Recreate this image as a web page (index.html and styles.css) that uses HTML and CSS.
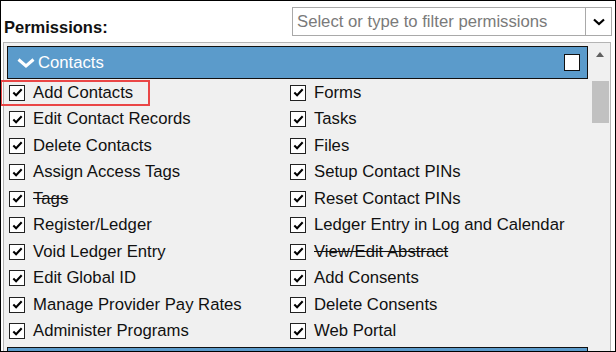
FILE: index.html
```html
<!DOCTYPE html>
<html lang="en">
<head>
    <meta charset="UTF-8">
    <meta name="viewport" content="width=device-width, initial-scale=1.0">
    <title>Permissions</title>
    <link rel="stylesheet" href="styles.css">
</head>
<body>
    <div class="frame">
        <!-- Top bar: label + filter -->
        <div class="top-bar">
            <label class="perm-label" for="permFilter">Permissions:</label>
            <div class="filter">
                <input id="permFilter" type="text" placeholder="Select or type to filter permissions">
                <span class="filter-btn">
                    <svg width="12" height="8" viewBox="0 0 12 8"><path d="M1 1.5 L6 6 L11 1.5" fill="none" stroke="#000" stroke-width="2.2"/></svg>
                </span>
            </div>
        </div>

        <!-- Permissions panel -->
        <div class="panel">
            <div class="panel-body">
                <div class="group-header">
                    <svg class="chev" width="18" height="10" viewBox="0 0 18 10"><path d="M1.5 1.5 L9 8 L16.5 1.5" fill="none" stroke="#fff" stroke-width="3"/></svg>
                    <span class="group-title">Contacts</span>
                    <span class="group-check"></span>
                </div>

                <div class="perm-grid">
                    <div class="perm"><span class="cb"><svg viewBox="0 0 14 14"><path d="M2.5 7 L5.5 10 L11.5 3.5" fill="none" stroke="#000" stroke-width="2.2"/></svg></span>Add Contacts</div>
                    <div class="perm"><span class="cb"><svg viewBox="0 0 14 14"><path d="M2.5 7 L5.5 10 L11.5 3.5" fill="none" stroke="#000" stroke-width="2.2"/></svg></span>Forms</div>
                    <div class="perm"><span class="cb"><svg viewBox="0 0 14 14"><path d="M2.5 7 L5.5 10 L11.5 3.5" fill="none" stroke="#000" stroke-width="2.2"/></svg></span>Edit Contact Records</div>
                    <div class="perm"><span class="cb"><svg viewBox="0 0 14 14"><path d="M2.5 7 L5.5 10 L11.5 3.5" fill="none" stroke="#000" stroke-width="2.2"/></svg></span>Tasks</div>
                    <div class="perm"><span class="cb"><svg viewBox="0 0 14 14"><path d="M2.5 7 L5.5 10 L11.5 3.5" fill="none" stroke="#000" stroke-width="2.2"/></svg></span>Delete Contacts</div>
                    <div class="perm"><span class="cb"><svg viewBox="0 0 14 14"><path d="M2.5 7 L5.5 10 L11.5 3.5" fill="none" stroke="#000" stroke-width="2.2"/></svg></span>Files</div>
                    <div class="perm"><span class="cb"><svg viewBox="0 0 14 14"><path d="M2.5 7 L5.5 10 L11.5 3.5" fill="none" stroke="#000" stroke-width="2.2"/></svg></span>Assign Access Tags</div>
                    <div class="perm"><span class="cb"><svg viewBox="0 0 14 14"><path d="M2.5 7 L5.5 10 L11.5 3.5" fill="none" stroke="#000" stroke-width="2.2"/></svg></span>Setup Contact PINs</div>
                    <div class="perm"><span class="cb"><svg viewBox="0 0 14 14"><path d="M2.5 7 L5.5 10 L11.5 3.5" fill="none" stroke="#000" stroke-width="2.2"/></svg></span><s>Tags</s></div>
                    <div class="perm"><span class="cb"><svg viewBox="0 0 14 14"><path d="M2.5 7 L5.5 10 L11.5 3.5" fill="none" stroke="#000" stroke-width="2.2"/></svg></span>Reset Contact PINs</div>
                    <div class="perm"><span class="cb"><svg viewBox="0 0 14 14"><path d="M2.5 7 L5.5 10 L11.5 3.5" fill="none" stroke="#000" stroke-width="2.2"/></svg></span>Register/Ledger</div>
                    <div class="perm"><span class="cb"><svg viewBox="0 0 14 14"><path d="M2.5 7 L5.5 10 L11.5 3.5" fill="none" stroke="#000" stroke-width="2.2"/></svg></span>Ledger Entry in Log and Calendar</div>
                    <div class="perm"><span class="cb"><svg viewBox="0 0 14 14"><path d="M2.5 7 L5.5 10 L11.5 3.5" fill="none" stroke="#000" stroke-width="2.2"/></svg></span>Void Ledger Entry</div>
                    <div class="perm"><span class="cb"><svg viewBox="0 0 14 14"><path d="M2.5 7 L5.5 10 L11.5 3.5" fill="none" stroke="#000" stroke-width="2.2"/></svg></span><s>View/Edit Abstract</s></div>
                    <div class="perm"><span class="cb"><svg viewBox="0 0 14 14"><path d="M2.5 7 L5.5 10 L11.5 3.5" fill="none" stroke="#000" stroke-width="2.2"/></svg></span>Edit Global ID</div>
                    <div class="perm"><span class="cb"><svg viewBox="0 0 14 14"><path d="M2.5 7 L5.5 10 L11.5 3.5" fill="none" stroke="#000" stroke-width="2.2"/></svg></span>Add Consents</div>
                    <div class="perm"><span class="cb"><svg viewBox="0 0 14 14"><path d="M2.5 7 L5.5 10 L11.5 3.5" fill="none" stroke="#000" stroke-width="2.2"/></svg></span>Manage Provider Pay Rates</div>
                    <div class="perm"><span class="cb"><svg viewBox="0 0 14 14"><path d="M2.5 7 L5.5 10 L11.5 3.5" fill="none" stroke="#000" stroke-width="2.2"/></svg></span>Delete Consents</div>
                    <div class="perm"><span class="cb"><svg viewBox="0 0 14 14"><path d="M2.5 7 L5.5 10 L11.5 3.5" fill="none" stroke="#000" stroke-width="2.2"/></svg></span>Administer Programs</div>
                    <div class="perm"><span class="cb"><svg viewBox="0 0 14 14"><path d="M2.5 7 L5.5 10 L11.5 3.5" fill="none" stroke="#000" stroke-width="2.2"/></svg></span>Web Portal</div>
                </div>

                <!-- next group, cut off -->
                <div class="group-header next"></div>
            </div>

            <!-- Scrollbar -->
            <div class="scrollbar">
                <span class="sb-arrow"></span>
                <span class="sb-thumb"></span>
            </div>
        </div>

        <!-- highlight annotation -->
        <div class="highlight"></div>
    </div>
</body>
</html>
```

FILE: styles.css
```css
html, body {
    margin: 0;
    padding: 0;
    background: #fff;
}

body {
    font-family: "Liberation Sans", Arial, sans-serif;
    font-size: 16.7px;
    color: #111;
}

.frame {
    position: relative;
    width: 616px;
    height: 352px;
    box-sizing: border-box;
    border: 1px solid #000;
    overflow: hidden;
    background: #fff;
}

/* Top bar */
.top-bar {
    display: flex;
    justify-content: space-between;
    align-items: flex-start;
    height: 41px;
    padding-left: 3px;
}

.perm-label {
    font-weight: bold;
    font-size: 16.5px;
    line-height: 18px;
    padding-top: 17px;
}

.filter {
    display: flex;
    width: 320px;
    height: 29px;
    box-sizing: border-box;
    margin-top: 6px;
    margin-right: 3px;
    border: 1px solid #a9a9a9;
    background: #fff;
}

.filter input {
    flex: 1;
    min-width: 0;
    border: none;
    outline: none;
    padding: 0 0 0 4px;
    font-family: "Liberation Sans", Arial, sans-serif;
    font-size: 16.7px;
    background: transparent;
}

.filter input::placeholder {
    color: #7a7a7a;
}

.filter-btn {
    width: 25px;
    display: flex;
    align-items: center;
    justify-content: center;
    border-left: 1px solid #a9a9a9;
}

/* Panel */
.panel {
    display: flex;
    width: 608px;
    height: 320px;
    box-sizing: border-box;
    margin-left: 2px;
    border: 1px solid #b4b4b4;
    background: #f0f0f0;
}

.panel-body {
    flex: 1;
    padding: 3px 0 0 3px;
}

.group-header {
    display: flex;
    align-items: center;
    width: 581px;
    height: 33px;
    box-sizing: border-box;
    border: 1px solid #111;
    background: #5b9bcb;
    padding-left: 9px;
}

.chev {
    display: block;
    margin-right: 3px;
}

.group-title {
    color: #fff;
    line-height: 18px;
    flex: 1;
}

.group-check {
    width: 16px;
    height: 17px;
    box-sizing: border-box;
    border: 1px solid #111;
    background: #fff;
    margin-right: 7px;
}

.group-header.next {
    margin-top: 3px;
}

.perm-grid {
    display: grid;
    grid-template-columns: 281px 300px;
    grid-auto-rows: 26.5px;
}

.perm {
    display: flex;
    align-items: center;
    padding-left: 2px;
    padding-top: 1px;
    line-height: 18px;
    white-space: nowrap;
}

.cb {
    width: 16px;
    height: 16px;
    box-sizing: border-box;
    border: 1px solid #222;
    background: #fff;
    margin-right: 8px;
    display: flex;
    align-items: center;
    justify-content: center;
}

.cb svg {
    width: 13px;
    height: 13px;
    display: block;
}

/* Scrollbar */
.scrollbar {
    width: 20px;
    margin-left: 2px;
    display: flex;
    flex-direction: column;
    align-items: center;
}

.sb-arrow {
    margin-top: 9px;
    width: 0;
    height: 0;
    border-left: 4px solid transparent;
    border-right: 4px solid transparent;
    border-bottom: 5px solid #606060;
}

.sb-thumb {
    margin-top: 24px;
    width: 17px;
    height: 42px;
    background: #c1c1c1;
}

/* Red annotation box */
.highlight {
    position: absolute;
    left: -1px;
    top: 79px;
    width: 150px;
    height: 26px;
    box-sizing: border-box;
    border: 2px solid #ea4646;
}
```
